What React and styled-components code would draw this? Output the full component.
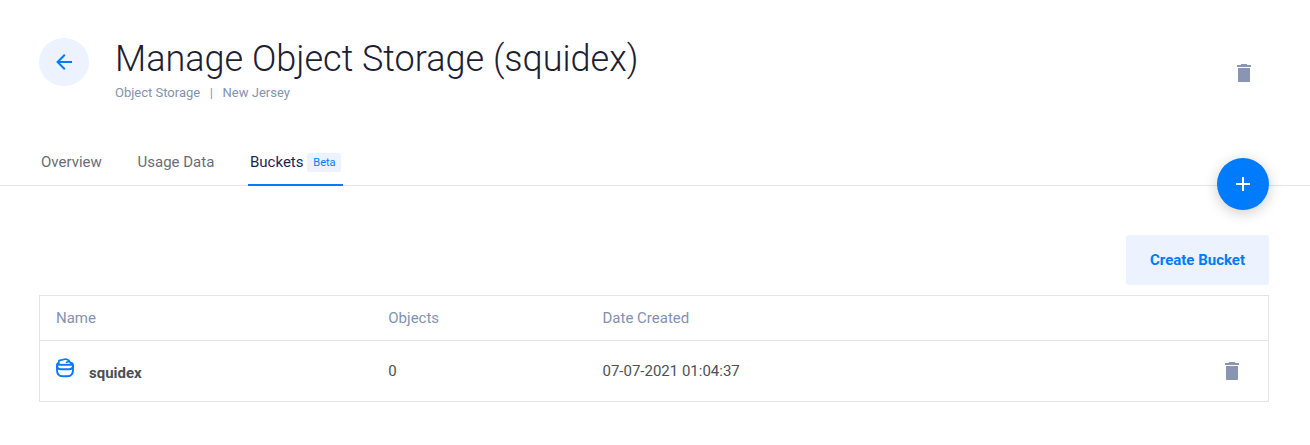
import React from 'react';
import styled, { createGlobalStyle } from 'styled-components';

const GlobalStyle = createGlobalStyle`
  * { box-sizing: border-box; }
  body {
    margin: 0;
    background: #fff;
    color: #4d5056;
    font-family: Roboto, "Liberation Sans", sans-serif;
    font-size: 15px;
    line-height: 20px;
  }
  button { font: inherit; border: 0; padding: 0; cursor: pointer; }
`;

const Page = styled.div`
  min-height: 445px;
  overflow: hidden;
`;

const Header = styled.header`
  display: flex;
  align-items: flex-start;
  height: 138px;
  padding: 38px 41px 0 39px;
`;

const BackButton = styled.button`
  display: flex;
  align-items: center;
  justify-content: center;
  width: 50px;
  height: 48px;
  border-radius: 50%;
  background: #ecf3ff;
  color: #007bfc;
`;

const Heading = styled.div`
  flex: 1;
  margin-left: 26px;
`;

const Title = styled.h1`
  margin: 0;
  color: #1b2031;
  font-size: 36px;
  font-weight: 300;
  line-height: 42px;
  white-space: nowrap;
`;

const Meta = styled.div`
  display: flex;
  gap: 9.6px;
  margin-top: 3px;
  color: #8392b0;
  font-size: 13px;
`;

const IconButton = styled.button`
  display: flex;
  margin-top: ${(p) => p.$top || 0}px;
  margin-right: ${(p) => p.$right || 0}px;
  background: none;
  color: #8a94b3;
`;

const Glyph = styled.svg`
  display: block;
  fill: currentColor;
`;

const TabBar = styled.nav`
  display: flex;
  align-items: flex-start;
  height: 48px;
  padding: 0 41px 0 39px;
  border-bottom: 1px solid #e3e4e8;
`;

const Tab = styled.a`
  display: flex;
  align-items: center;
  height: 48px;
  margin-right: 31.7px;
  padding: 2px 2px 0;
  border-bottom: 2px solid ${(p) => (p.$active ? '#007bfc' : 'transparent')};
  color: ${(p) => (p.$active ? '#1b2555' : '#696d75')};
`;

const Badge = styled.span`
  height: 19px;
  margin-left: 3.8px;
  padding: 0 5.4px 0 6px;
  border-radius: 2px;
  background: #ecf3ff;
  color: #007bfc;
  font-size: 11px;
  line-height: 19px;
`;

const AddButton = styled.button`
  display: flex;
  align-items: center;
  justify-content: center;
  width: 52px;
  height: 52px;
  margin: 20px 0 0 auto;
  border-radius: 50%;
  background: #007bfc;
  color: #fff;
  box-shadow: 0 3px 14px rgba(0, 0, 0, 0.2);
  z-index: 1;
`;

const Content = styled.main`
  padding: 49px 41px 0 39px;
`;

const Actions = styled.div`
  display: flex;
  justify-content: flex-end;
  margin-bottom: 10px;
`;

const CreateButton = styled.button`
  width: 143px;
  height: 50px;
  border-radius: 3px;
  background: #ecf3ff;
  color: #007bfc;
  && { font-weight: 700; }
`;

const Table = styled.div`
  border: 1px solid #e3e4e8;
`;

const Row = styled.div`
  display: grid;
  grid-template-columns: 332.3px 214.2px 1fr auto;
  align-items: center;
  height: ${(p) => (p.$head ? 44 : 61)}px;
  padding: 0 24px 0 16px;
  color: ${(p) => (p.$head ? '#8392b0' : '#4d5056')};
  & + & { border-top: 1px solid #e3e4e8; }
`;

const NameCell = styled.div`
  display: flex;
  align-items: flex-start;
  padding-bottom: 1px;
`;

const BucketName = styled.strong`
  margin: 5px 0 0 14px;
  font-weight: 700;
`;

const BucketGlyph = styled.svg`
  display: block;
  fill: none;
  stroke: #007bfc;
  stroke-width: 1.9;
  stroke-linejoin: round;
`;

const Icon = ({ d }) => (
  <Glyph width="24" height="24" viewBox="0 0 24 24" aria-hidden="true">
    <path d={d} />
  </Glyph>
);

const TRASH = 'M19 4h-3.5l-1-1h-5l-1 1H5v2h14V4M6 20c0 .6.4 1 1 1h10c.6 0 1-.4 1-1V7H6v13z';
const ARROW = 'M20 11v2H8l5.5 5.5-1.42 1.42L4.16 12l7.92-7.92L13.5 5.5 8 11h12z';
const PLUS = 'M19 13h-6v6h-2v-6H5v-2h6V5h2v6h6v2z';

const BucketIcon = () => (
  <BucketGlyph width="19" height="20" viewBox="0 0 19 20" aria-hidden="true">
    <path d="M3 5C1.700 5.200 1 6 1 7.200c0 2.800 1.600 4 4 4h8c2.400 0 4-1.200 4-4 0-1.200-.7-2-2-2.200" />
    <path d="M1 6.800h16" />
    <path d="M2.900 6V2.600L9.800 1l2.800 1.300L15.300 6M9.800 4.600l3.400-1" strokeWidth="1.600" />
    <path d="M1 7.200v5c0 4.200 1.900 6 5.500 6h5c3.600 0 5.500-1.800 5.500-6v-5" />
  </BucketGlyph>
);

export default function App() {
  return (
    <Page>
      <GlobalStyle />
      <Header>
        <BackButton aria-label="Back"><Icon d={ARROW} /></BackButton>
        <Heading>
          <Title>Manage Object Storage (squidex)</Title>
          <Meta>
            <span>Object Storage</span>
            <span>|</span>
            <span>New Jersey</span>
          </Meta>
        </Heading>
        <IconButton aria-label="Delete storage" $top={23} $right={13}><Icon d={TRASH} /></IconButton>
      </Header>
      <TabBar>
        <Tab>Overview</Tab>
        <Tab>Usage Data</Tab>
        <Tab $active>Buckets<Badge>Beta</Badge></Tab>
        <AddButton aria-label="Add"><Icon d={PLUS} /></AddButton>
      </TabBar>
      <Content>
        <Actions>
          <CreateButton>Create Bucket</CreateButton>
        </Actions>
        <Table>
          <Row $head>
            <span>Name</span>
            <span>Objects</span>
            <span>Date Created</span>
          </Row>
          <Row>
            <NameCell>
              <BucketIcon />
              <BucketName>squidex</BucketName>
            </NameCell>
            <span>0</span>
            <span>07-07-2021 01:04:37</span>
            <IconButton aria-label="Delete bucket"><Icon d={TRASH} /></IconButton>
          </Row>
        </Table>
      </Content>
    </Page>
  );
}
